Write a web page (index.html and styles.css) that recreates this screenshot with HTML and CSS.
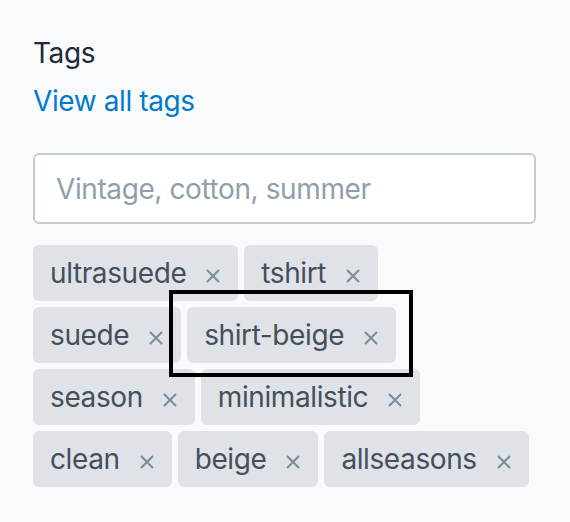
FILE: index.html
```html
<!DOCTYPE html>
<html lang="en">
<head>
<meta charset="utf-8">
<title>Tags</title>
<link rel="stylesheet" href="styles.css">
</head>
<body>
<div class="panel">
  <div class="heading">Tags</div>
  <a class="link" href="#">View all tags</a>
  <div class="field">
    <input class="input" type="text" placeholder="Vintage, cotton, summer">
  </div>
  <ul class="tags">
    <li class="tag"><span class="tag-text">ultrasuede</span><span class="remove"><svg viewBox="0 0 16 16"><path d="M2 2L14 14M14 2L2 14"/></svg></span></li>
    <li class="tag"><span class="tag-text">tshirt</span><span class="remove"><svg viewBox="0 0 16 16"><path d="M2 2L14 14M14 2L2 14"/></svg></span></li>
    <li class="tag"><span class="tag-text">suede</span><span class="remove"><svg viewBox="0 0 16 16"><path d="M2 2L14 14M14 2L2 14"/></svg></span></li>
    <li class="tag focused"><span class="tag-text">shirt-beige</span><span class="remove"><svg viewBox="0 0 16 16"><path d="M2 2L14 14M14 2L2 14"/></svg></span></li>
    <li class="tag"><span class="tag-text">season</span><span class="remove"><svg viewBox="0 0 16 16"><path d="M2 2L14 14M14 2L2 14"/></svg></span></li>
    <li class="tag"><span class="tag-text">minimalistic</span><span class="remove"><svg viewBox="0 0 16 16"><path d="M2 2L14 14M14 2L2 14"/></svg></span></li>
    <li class="tag"><span class="tag-text">clean</span><span class="remove"><svg viewBox="0 0 16 16"><path d="M2 2L14 14M14 2L2 14"/></svg></span></li>
    <li class="tag"><span class="tag-text">beige</span><span class="remove"><svg viewBox="0 0 16 16"><path d="M2 2L14 14M14 2L2 14"/></svg></span></li>
    <li class="tag"><span class="tag-text">allseasons</span><span class="remove"><svg viewBox="0 0 16 16"><path d="M2 2L14 14M14 2L2 14"/></svg></span></li>
  </ul>
</div>
</body>
</html>
```
FILE: styles.css
```css
html, body {
  margin: 0;
  padding: 0;
  background: #f9fafb;
}
body {
  font-family: Inter, "Noto Sans", "Liberation Sans", sans-serif;
  font-size: 28px;
  letter-spacing: -0.4px;
  color: #212b36;
  width: 570px;
  height: 522px;
  overflow: hidden;
}
.panel {
  padding: 36px 34px 0 33px;
  display: flex;
  flex-direction: column;
}
.heading {
  line-height: 34px;
  height: 34px;
}
.link {
  display: block;
  color: #007ace;
  text-decoration: none;
  line-height: 34px;
  margin-top: 14px;
  align-self: flex-start;
}
.field {
  margin-top: 35px;
}
.input {
  box-sizing: border-box;
  width: 503px;
  height: 71px;
  border: 2px solid #c4cdd5;
  border-radius: 6px;
  background: #fff;
  padding: 0 21px;
  font: inherit;
  font-size: 28px;
  letter-spacing: -0.4px;
  color: #212b36;
  outline: none;
}
.input::placeholder {
  color: #919eab;
}
.tags {
  list-style: none;
  margin: 21px 0 0 0;
  padding: 0;
  display: flex;
  flex-wrap: wrap;
  gap: 6px 6px;
  width: 497.5px;
}
.tag {
  position: relative;
  display: flex;
  align-items: center;
  height: 56px;
  padding: 0 17px;
  background: #dfe3e8;
  border-radius: 6px;
  color: #454f5b;
  line-height: 56px;
}
.remove {
  display: flex;
  margin-left: 19px;
  margin-top: 6px;
}
.remove svg {
  width: 16px;
  height: 16px;
  fill: none;
  stroke: #798c9c;
  stroke-width: 2;
}
.focused::after {
  content: "";
  position: absolute;
  z-index: 1;
  left: -18px;
  top: -17px;
  width: 236px;
  height: 79px;
  border: 4.5px solid #000;
  pointer-events: none;
}
```
